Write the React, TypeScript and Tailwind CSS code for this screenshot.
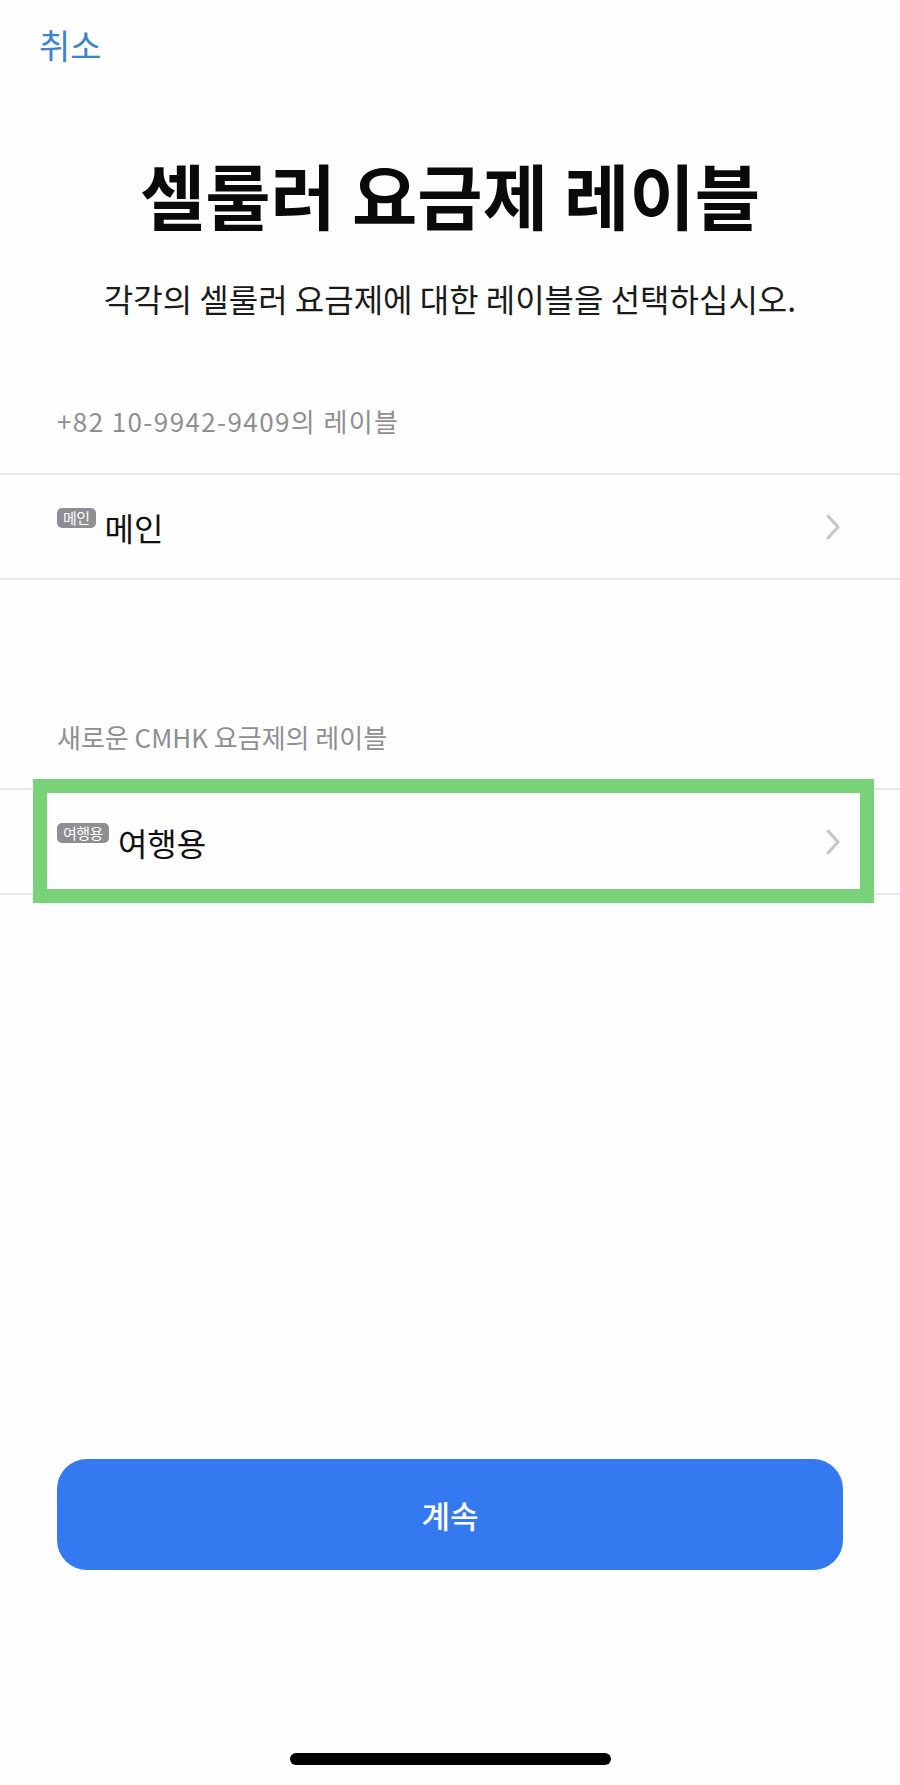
import React from "react";

function Chevron() {
  return (
    <svg width="16" height="26" viewBox="0 0 16 26" fill="none" className="shrink-0">
      <polyline points="3,2 13,13 3,24" stroke="#c6c6ca" strokeWidth="3" strokeLinecap="round" strokeLinejoin="round" />
    </svg>
  );
}

function Separator() {
  return <div className="h-[2px] bg-[#e8e8ec] shrink-0" />;
}

function LabelRow({ tag, label }: { tag: string; label: string }) {
  return (
    <div className="h-[103px] flex items-center justify-between pl-[57px] pr-[59px] shrink-0">
      <div className="flex items-start gap-[9px]">
        <span className="mt-[-3px] h-[20px] px-[6px] rounded-[5px] bg-[#8e8e93] text-white text-[15px] leading-[20px] tracking-[-0.5px]">
          {tag}
        </span>
        <span className="text-[32px] leading-none text-[#111111]">{label}</span>
      </div>
      <Chevron />
    </div>
  );
}

export default function App() {
  return (
    <div className="w-[900px] h-[1785px] flex flex-col bg-[#fefefe] font-['Noto_Sans_CJK_KR','Noto_Sans',sans-serif]">
      <div className="h-[90px] flex items-center pl-[39px] shrink-0">
        <span className="text-[34px] leading-none text-[#3d84c9]">취소</span>
      </div>

      <div className="mt-[63px] h-[80px] flex items-center justify-center shrink-0">
        <h1 className="text-[71px] leading-none font-bold text-[#0a0a0a]">셀룰러 요금제 레이블</h1>
      </div>

      <div className="mt-[45px] h-[40px] flex items-center justify-center shrink-0">
        <p className="text-[32px] leading-none text-[#1a1a1a]">각각의 셀룰러 요금제에 대한 레이블을 선택하십시오.</p>
      </div>

      <div className="mt-[83px] h-[40px] flex items-center pl-[57px] shrink-0">
        <span className="text-[26px] leading-none tracking-[1.4px] text-[#8e8e93]">+82 10-9942-9409의 레이블</span>
      </div>

      <div className="mt-[32px]">
        <Separator />
        <LabelRow tag="메인" label="메인" />
        <Separator />
      </div>

      <div className="mt-[137px] h-[40px] flex items-center pl-[57px] shrink-0">
        <span className="text-[26px] leading-none text-[#8e8e93]">새로운 CMHK 요금제의 레이블</span>
      </div>

      <div className="mt-[31px]">
        <Separator />
        <div className="relative">
          <LabelRow tag="여행용" label="여행용" />
          <div className="absolute left-[33px] right-[26px] top-[-11px] bottom-[-10px] border-[14px] border-[#79d277]" />
        </div>
        <Separator />
      </div>

      <div className="flex-1" />

      <div className="px-[57px] shrink-0">
        <button className="w-full h-[111px] rounded-[30px] bg-[#3579f0] flex items-center justify-center">
          <span className="text-[31px] leading-none font-medium text-white">계속</span>
        </button>
      </div>

      <div className="mt-[183px] mb-[20px] h-[12px] flex justify-center shrink-0">
        <div className="w-[321px] h-[12px] rounded-full bg-black" />
      </div>
    </div>
  );
}
